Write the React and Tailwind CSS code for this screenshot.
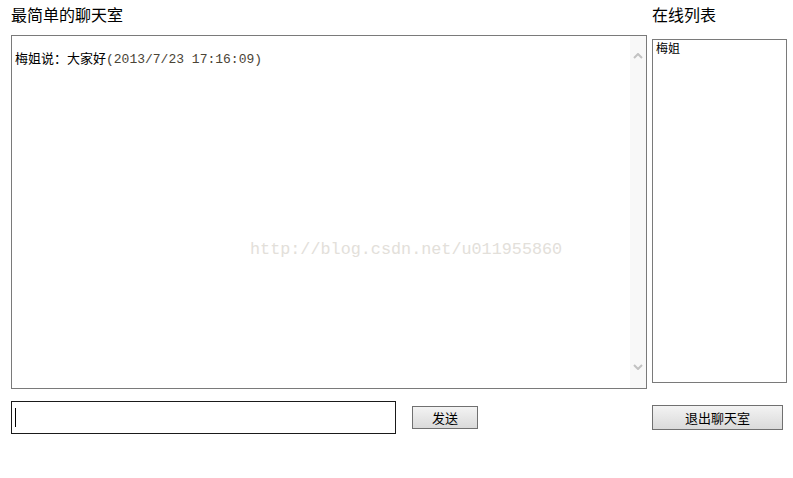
import React from "react";

const cjk = { fontFamily: '"Noto Sans CJK SC", "Liberation Sans", sans-serif' };
const mono = { fontFamily: '"Liberation Mono", "Noto Sans CJK SC", monospace' };

function Chevron({ up }) {
  return (
    <svg width="10" height="6" viewBox="0 0 10 6">
      <path
        d={up ? "M1 5 L5 1 L9 5" : "M1 1 L5 5 L9 1"}
        fill="none"
        stroke="#c2c2c2"
        strokeWidth="2"
      />
    </svg>
  );
}

export default function App() {
  return (
    <div className="w-[793px] h-[478px] bg-white flex text-black" style={cjk}>
      {/* 左边：聊天区 */}
      <div className="pl-[11px] w-[647px] flex flex-col">
        <h1 className="h-[35px] pt-[2px] text-[16px] leading-[24px] font-normal">最简单的聊天室</h1>
        <div className="relative h-[354px] border border-[#7a7a7a] flex">
          <div className="flex-1 pl-[3px] pt-[13px] text-[13px] leading-[17px]">
            梅姐说：大家好
            <span className="text-[#4a4436]" style={mono}>(2013/7/23 17:16:09)</span>
          </div>
          <div className="w-[16px] bg-[#f8f8f8] flex flex-col items-center justify-between pt-[17px] pb-[18px]">
            <Chevron up />
            <Chevron />
          </div>
          <div
            className="absolute left-[238px] top-[204px] text-[16.8px] leading-[20px] text-[#e3e0da]"
            style={mono}
          >
            http://blog.csdn.net/u011955860
          </div>
        </div>
        <div className="mt-[12px] flex items-start">
          <div className="w-[385px] h-[33px] border border-[#1a1a1a] flex items-center pl-[3px]">
            <div className="w-px h-[19px] bg-black" />
          </div>
          <button className="ml-[16px] mt-[5px] w-[66px] h-[23px] border border-[#707070] bg-gradient-to-b from-[#f3f3f3] to-[#dadada] text-[13px] leading-[20px]">
            发送
          </button>
        </div>
      </div>

      {/* 右边：在线列表 */}
      <div className="ml-[5px] w-[135px] flex flex-col">
        <h2 className="h-[39px] pt-[2px] text-[16px] leading-[24px] font-normal">在线列表</h2>
        <div className="h-[344px] border border-[#7a7a7a] px-[3px] text-[12px] leading-[15px]">
          梅姐
        </div>
        <button className="mt-[22px] w-[131px] h-[25px] border border-[#707070] bg-gradient-to-b from-[#f3f3f3] to-[#dadada] text-[13px] leading-[22px]">
          退出聊天室
        </button>
      </div>
    </div>
  );
}
